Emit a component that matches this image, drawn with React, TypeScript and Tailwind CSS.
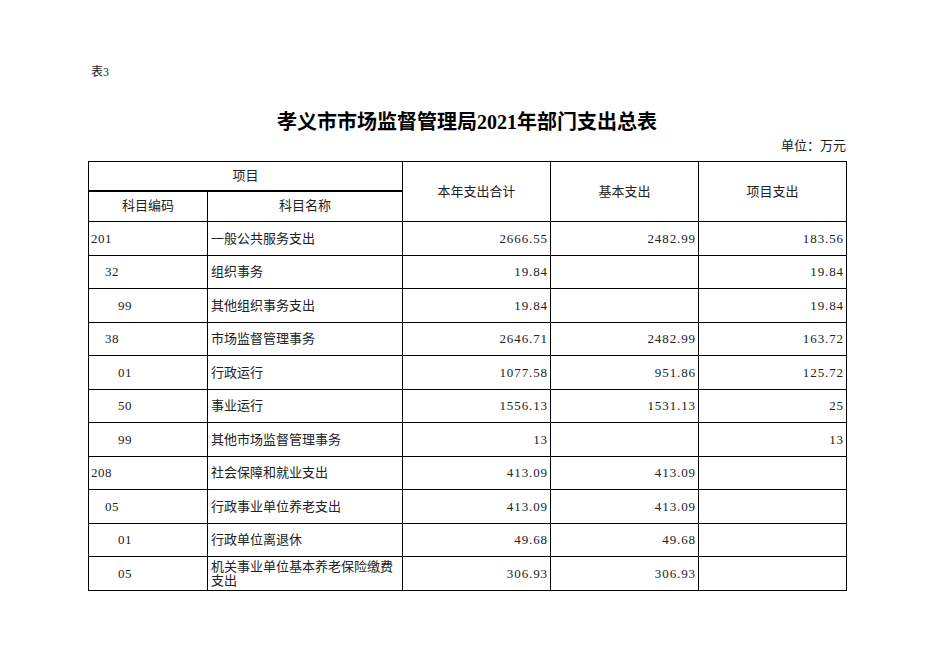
import React from 'react';

type Row = {
  code: string;
  level: number;
  name: React.ReactNode;
  total: string;
  basic: string;
  project: string;
};

const rows: Row[] = [
  { code: '201', level: 0, name: '一般公共服务支出', total: '2666.55', basic: '2482.99', project: '183.56' },
  { code: '32', level: 1, name: '组织事务', total: '19.84', basic: '', project: '19.84' },
  { code: '99', level: 2, name: '其他组织事务支出', total: '19.84', basic: '', project: '19.84' },
  { code: '38', level: 1, name: '市场监督管理事务', total: '2646.71', basic: '2482.99', project: '163.72' },
  { code: '01', level: 2, name: '行政运行', total: '1077.58', basic: '951.86', project: '125.72' },
  { code: '50', level: 2, name: '事业运行', total: '1556.13', basic: '1531.13', project: '25' },
  { code: '99', level: 2, name: '其他市场监督管理事务', total: '13', basic: '', project: '13' },
  { code: '208', level: 0, name: '社会保障和就业支出', total: '413.09', basic: '413.09', project: '' },
  { code: '05', level: 1, name: '行政事业单位养老支出', total: '413.09', basic: '413.09', project: '' },
  { code: '01', level: 2, name: '行政单位离退休', total: '49.68', basic: '49.68', project: '' },
  {
    code: '05',
    level: 2,
    name: (
      <>
        机关事业单位基本养老保险缴费
        <br />
        支出
      </>
    ),
    total: '306.93',
    basic: '306.93',
    project: '',
  },
];

const indent = ['pl-[2px]', 'pl-[16px]', 'pl-[29px]'];

const App = () => {
  return (
    <div
      className="w-[936px] h-[662px] bg-white text-[#222]"
      style={{ fontFamily: '"Liberation Serif", "Noto Sans CJK SC", serif' }}
    >
      <div className="pl-[91px] pt-[64px] text-[12px] leading-[16px]">表3</div>

      <div className="ml-[88px] w-[758px]">
        <div className="mt-[28px] h-[28px] leading-[28px] text-center text-[20px] font-bold text-black">
          孝义市市场监督管理局2021年部门支出总表
        </div>
        <div className="mt-[2px] h-[16px] leading-[16px] text-right text-[13px]">单位：万元</div>

        <table className="mt-[7px] w-[758px] table-fixed border-collapse text-[13px] leading-[14px]">
          <colgroup>
            <col className="w-[119px]" />
            <col className="w-[195px]" />
            <col className="w-[148px]" />
            <col className="w-[148px]" />
            <col className="w-[148px]" />
          </colgroup>
          <thead>
            <tr className="h-[29px]">
              <th colSpan={2} className="border border-black border-b-2 font-normal text-center">
                项目
              </th>
              <th rowSpan={2} className="border border-black font-normal text-center">
                本年支出合计
              </th>
              <th rowSpan={2} className="border border-black font-normal text-center">
                基本支出
              </th>
              <th rowSpan={2} className="border border-black font-normal text-center">
                项目支出
              </th>
            </tr>
            <tr className="h-[31px]">
              <th className="border border-black font-normal text-center">科目编码</th>
              <th className="border border-black font-normal text-center">科目名称</th>
            </tr>
          </thead>
          <tbody>
            {rows.map((r, i) => (
              <tr key={i} className={i % 2 === 0 ? 'h-[34px]' : 'h-[33px]'}>
                <td className={`border border-black tracking-[0.5px] ${indent[r.level]}`}>{r.code}</td>
                <td className="border border-black pl-[3px]">{r.name}</td>
                <td className="border border-black text-right pr-[2px] tracking-[0.9px]">{r.total}</td>
                <td className="border border-black text-right pr-[2px] tracking-[0.9px]">{r.basic}</td>
                <td className="border border-black text-right pr-[2px] tracking-[0.9px]">{r.project}</td>
              </tr>
            ))}
          </tbody>
        </table>
      </div>
    </div>
  );
};

export default App;
